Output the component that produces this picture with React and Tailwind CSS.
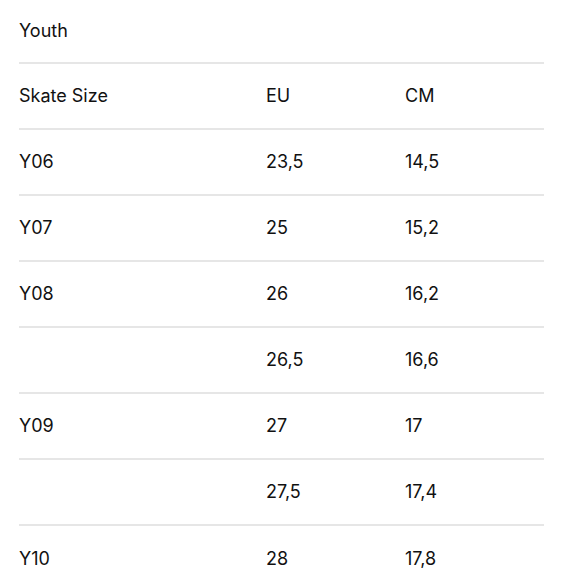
import React from "react";

const rows = [
  ["Y06", "23,5", "14,5"],
  ["Y07", "25", "15,2"],
  ["Y08", "26", "16,2"],
  ["", "26,5", "16,6"],
  ["Y09", "27", "17"],
  ["", "27,5", "17,4"],
  ["Y10", "28", "17,8"],
];

export default function App() {
  return (
    <div
      className="min-h-screen bg-white px-[19px] text-[18px] text-[#111]"
      style={{ fontFamily: "Inter, 'Noto Sans', sans-serif" }}
    >
      <div className="h-[64px] flex items-center pb-[2px] border-b-2 border-[#e6e6e6]">Youth</div>
      <div className="h-[66px] grid grid-cols-[247px_139px_1fr] items-center pb-[2px] border-b-2 border-[#e6e6e6]">
        <span>Skate Size</span>
        <span>EU</span>
        <span>CM</span>
      </div>
      {rows.map((r, i) => (
        <div
          key={i}
          className={
            "h-[66px] grid grid-cols-[247px_139px_1fr] items-center pb-[2px] " +
            (i < rows.length - 1 ? "border-b-2 border-[#e6e6e6]" : "")
          }
        >
          <span>{r[0]}</span>
          <span>{r[1]}</span>
          <span>{r[2]}</span>
        </div>
      ))}
    </div>
  );
}
